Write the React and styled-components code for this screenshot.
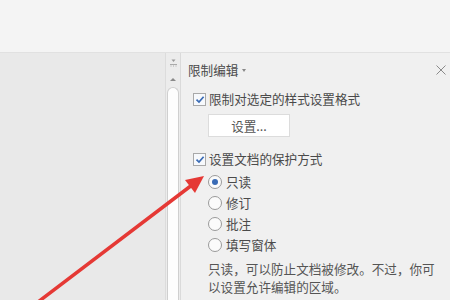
import React from "react";
import styled, { createGlobalStyle } from "styled-components";

const Global = createGlobalStyle`
  html, body { margin: 0; padding: 0; }
  body { font-family: "Noto Sans CJK SC", "Noto Sans", sans-serif; background: #e9e9e9; }
`;

const Frame = styled.div`
  position: relative;
  width: 450px;
  height: 300px;
  overflow: hidden;
  display: flex;
  flex-direction: column;
`;

const TopBar = styled.div`
  height: 52px;
  background: #f4f4f4;
  border-bottom: 1px solid #e1e1e1;
  box-shadow: 0 1px 1px rgba(0,0,0,0.03);
`;

const Main = styled.div`
  flex: 1;
  display: flex;
  min-height: 0;
`;

const DocArea = styled.div`
  width: 165px;
  background: #e9e9e9;
`;

const ScrollCol = styled.div`
  width: 15px;
  border-left: 1px solid #dcdcdc;
  background: #ececec;
  display: flex;
  flex-direction: column;
  align-items: center;
  box-sizing: border-box;
  padding-top: 6px;
`;

const SplitIcon = styled.svg`
  width: 7px;
  height: 8px;
  display: block;
`;

const UpArrow = styled.div`
  margin-top: 11px;
  width: 0;
  height: 0;
  border-left: 3px solid transparent;
  border-right: 3px solid transparent;
  border-bottom: 3px solid #8a8a8a;
`;

const Track = styled.div`
  margin-top: 6px;
  flex: 1;
  width: 12px;
  box-sizing: border-box;
  background: #fdfdfd;
  border: 1px solid #cfcfcf;
  border-bottom: none;
  border-radius: 6px 6px 0 0;
`;

const Panel = styled.div`
  flex: 1;
  background: #f0f0f0;
  border-left: 1px solid #dadada;
  padding: 8px 0 0 7px;
  color: #4a4a4a;
  font-size: 12.6px;
`;

const Header = styled.div`
  display: flex;
  align-items: center;
  height: 18px;
  line-height: 18px;
  padding-right: 4px;
`;

const Title = styled.span`
  color: #4a4a4a;
`;

const Caret = styled.span`
  margin-left: 4px;
  margin-top: 1px;
  width: 0;
  height: 0;
  border-left: 2.5px solid transparent;
  border-right: 2.5px solid transparent;
  border-top: 3px solid #888;
`;

const Close = styled.svg`
  margin-left: auto;
  width: 10px;
  height: 10px;
  display: block;
`;

const CheckRow = styled.div`
  display: flex;
  align-items: center;
  height: 20px;
  margin-top: ${(p) => p.$mt}px;
  padding-left: 5px;
  line-height: 20px;
`;

const Box = styled.span`
  width: 13px;
  height: 13px;
  box-sizing: border-box;
  border: 1px solid #a9a9a9;
  background: #f7f9fc;
  display: flex;
  align-items: center;
  justify-content: center;
  margin-right: 3px;
`;

const Button = styled.div`
  margin: 5px 0 0 20px;
  width: 82px;
  height: 23px;
  box-sizing: border-box;
  background: #ffffff;
  border: 1px solid #dcdcdc;
  display: flex;
  align-items: center;
  justify-content: center;
  color: #555;
`;

const Radios = styled.div`
  margin-top: 2px;
  padding-left: 20px;
  display: flex;
  flex-direction: column;
`;

const RadioRow = styled.div`
  display: flex;
  align-items: center;
  height: 21px;
  line-height: 21px;
`;

const Circle = styled.span`
  width: 14px;
  height: 14px;
  box-sizing: border-box;
  border-radius: 50%;
  border: 1px solid #9a9a9a;
  background: #fbfbfb;
  display: flex;
  align-items: center;
  justify-content: center;
  margin-right: 4px;
  &::after {
    content: "";
    display: ${(p) => (p.$on ? "block" : "none")};
    width: 6px;
    height: 6px;
    border-radius: 50%;
    background: #3a6bb5;
  }
`;

const Desc = styled.p`
  margin: 5px 0 0 20px;
  width: 230px;
  line-height: 18px;
  color: #555;
`;

const ArrowSvg = styled.svg`
  position: absolute;
  left: 0;
  top: 0;
  width: 450px;
  height: 300px;
  pointer-events: none;
`;

const Check = () => (
  <svg width="10" height="9" viewBox="0 0 10 9">
    <path d="M1.5 4.6 L4 7 L8.6 1.8" fill="none" stroke="#3a6bb5" strokeWidth="1.7" />
  </svg>
);

export default function App() {
  return (
    <Frame>
      <Global />
      <TopBar />
      <Main>
        <DocArea />
        <ScrollCol>
          <SplitIcon viewBox="0 0 7 8">
            <path d="M1.5 0.5 L5.5 0.5 L3.5 3 Z" fill="#999" />
            <rect x="0" y="5" width="7" height="1" fill="#aaa" />
            <rect x="0.5" y="6.5" width="1" height="1" fill="#aaa" />
            <rect x="3" y="6.5" width="1" height="1" fill="#aaa" />
            <rect x="5.5" y="6.5" width="1" height="1" fill="#aaa" />
          </SplitIcon>
          <UpArrow />
          <Track />
        </ScrollCol>
        <Panel>
          <Header>
            <Title>限制编辑</Title>
            <Caret />
            <Close viewBox="0 0 10 10">
              <path d="M0.5 0.5 L9.5 9.5 M9.5 0.5 L0.5 9.5" stroke="#8a8a8a" strokeWidth="1" />
            </Close>
          </Header>
          <CheckRow $mt={10}>
            <Box><Check /></Box>
            限制对选定的样式设置格式
          </CheckRow>
          <Button>设置...</Button>
          <CheckRow $mt={12}>
            <Box><Check /></Box>
            设置文档的保护方式
          </CheckRow>
          <Radios>
            <RadioRow><Circle $on />只读</RadioRow>
            <RadioRow><Circle />修订</RadioRow>
            <RadioRow><Circle />批注</RadioRow>
            <RadioRow><Circle />填写窗体</RadioRow>
          </Radios>
          <Desc>只读，可以防止文档被修改。不过，你可以设置允许编辑的区域。</Desc>
        </Panel>
      </Main>
      <ArrowSvg viewBox="0 0 450 300">
        <line x1="38" y1="302" x2="192" y2="185" stroke="#e53935" strokeWidth="3.5" strokeLinecap="round" />
        <path d="M204 176 L185 180 L195 193 Z" fill="#e53935" />
      </ArrowSvg>
    </Frame>
  );
}
